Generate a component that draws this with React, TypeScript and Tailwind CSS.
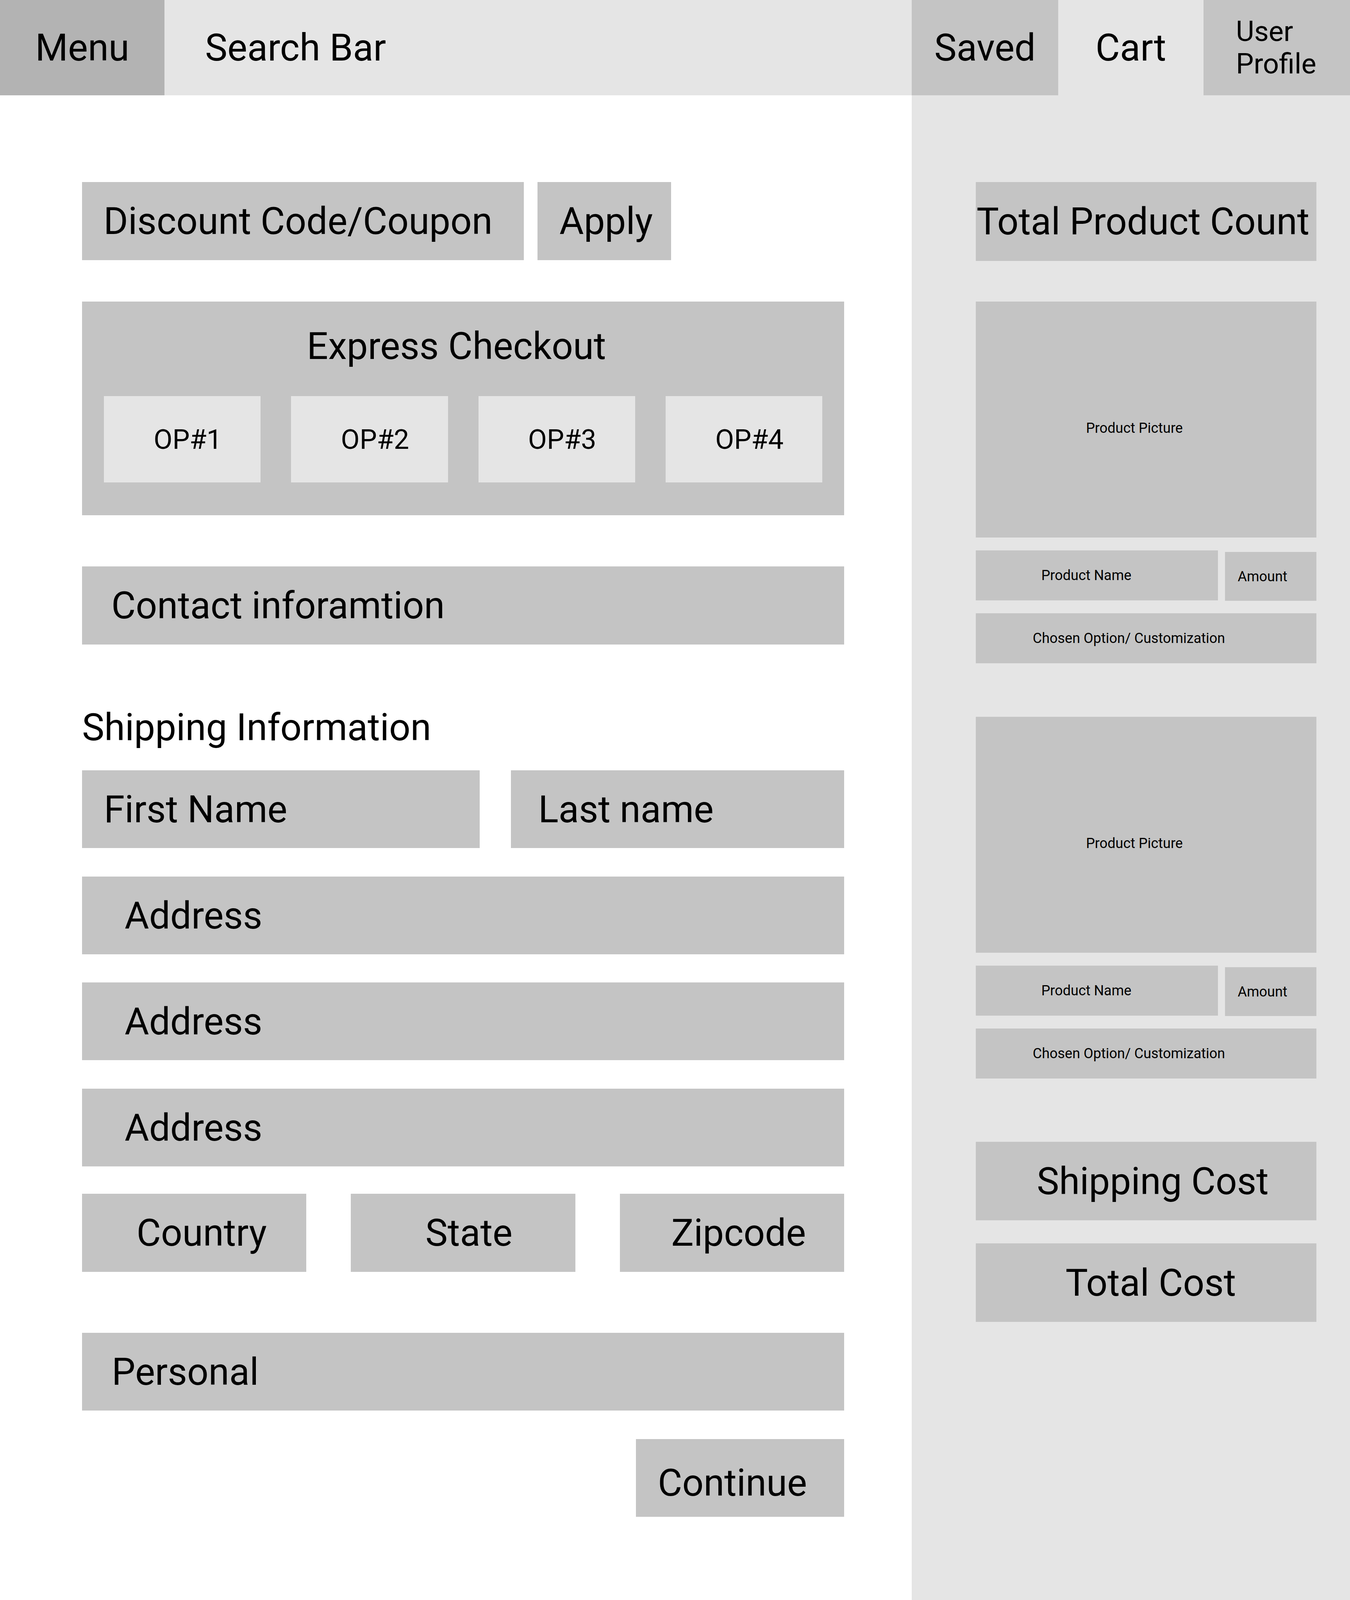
import type { ReactNode } from 'react';

// gray wireframe block; text is vertically centred
function Block({ className = '', children }: { className?: string; children?: ReactNode }) {
  return <div className={`flex items-center bg-[#c4c4c4] whitespace-nowrap ${className}`}>{children}</div>;
}

function CartItem() {
  return (
    <div className="flex flex-col text-[36px] leading-none">
      <Block className="h-[604px] justify-center pr-[60px] pt-[44px]">Product Picture</Block>
      <div className="mt-[33px] flex gap-[18px] items-start">
        <Block className="w-[620px] h-[128px] justify-center pr-[54px]">Product Name</Block>
        <Block className="flex-1 mt-[4px] h-[125px] justify-center pr-[42px]">Amount</Block>
      </div>
      <Block className="mt-[32px] h-[128px] justify-center pr-[88px]">Chosen Option/ Customization</Block>
    </div>
  );
}

export default function App() {
  const ops = ['OP#1', 'OP#2', 'OP#3', 'OP#4'];

  return (
    <div className="w-[3456px] min-h-[4100px] flex flex-col bg-white text-black font-['Roboto',sans-serif] text-[96px] leading-none">
      {/* top bar */}
      <header className="h-[244px] flex">
        <div className="w-[421px] bg-[#b3b3b3] flex items-center justify-center">Menu</div>
        <div className="w-[1913px] bg-[#e5e5e5] flex items-center pl-[104px]">Search Bar</div>
        <div className="w-[375px] bg-[#c4c4c4] flex items-center justify-center">Saved</div>
        <div className="w-[372px] bg-[#e5e5e5] flex items-center justify-center">Cart</div>
        <div className="flex-1 bg-[#c4c4c4] flex items-center pl-[83px] text-[72px] leading-[83px]">
          User
          <br />
          Profile
        </div>
      </header>

      <div className="flex-1 flex">
        {/* checkout form */}
        <main className="w-[2334px] pt-[222px] pl-[210px] pr-[173px] pb-[100px] flex flex-col">
          <div className="h-[200px] flex gap-[35px]">
            <Block className="w-[1131px] pl-[55px]">Discount Code/Coupon</Block>
            <Block className="w-[342px] pl-[56px]">Apply</Block>
          </div>

          <div className="mt-[106px] h-[547px] bg-[#c4c4c4] pt-[58px] flex flex-col">
            <div className="leading-[112px] text-center pr-[34px]">Express Checkout</div>
            <div className="mt-[72px] h-[221px] grid grid-cols-4 gap-[78px] px-[56px] text-[70px]">
              {ops.map(op => (
                <div key={op} className="bg-[#e5e5e5] flex items-center justify-center pl-[28px]">{op}</div>
              ))}
            </div>
          </div>

          <Block className="mt-[131px] h-[200px] pl-[75px]">Contact inforamtion</Block>

          <div className="mt-[156px] leading-[112px]">Shipping Information</div>

          <div className="mt-[54px] h-[199px] flex gap-[80px]">
            <Block className="w-[1018px] pl-[56px]">First Name</Block>
            <Block className="flex-1 pl-[70px]">Last name</Block>
          </div>
          <Block className="mt-[73px] h-[199px] pl-[109px]">Address</Block>
          <Block className="mt-[72px] h-[199px] pl-[109px]">Address</Block>
          <Block className="mt-[73px] h-[199px] pl-[109px]">Address</Block>

          <div className="mt-[70px] h-[200px] grid grid-cols-3 gap-[114px]">
            <Block className="justify-center pl-[38px]">Country</Block>
            <Block className="justify-center pl-[30px]">State</Block>
            <Block className="justify-center pl-[34px]">Zipcode</Block>
          </div>

          <Block className="mt-[156px] h-[199px] pl-[76px]">Personal</Block>
          <Block className="mt-[73px] h-[199px] w-[533px] self-end pl-[56px] pt-[24px]">Continue</Block>
        </main>

        {/* order summary */}
        <aside className="flex-1 bg-[#e5e5e5] pt-[222px] pl-[164px] pr-[86px] flex flex-col">
          <Block className="h-[202px] pl-[2px]">Total Product Count</Block>
          <div className="mt-[104px]">
            <CartItem />
          </div>
          <div className="mt-[137px]">
            <CartItem />
          </div>
          <Block className="mt-[162px] h-[201px] justify-center pl-[34px]">Shipping Cost</Block>
          <Block className="mt-[59px] h-[201px] justify-center pl-[24px]">Total Cost</Block>
        </aside>
      </div>
    </div>
  );
}
